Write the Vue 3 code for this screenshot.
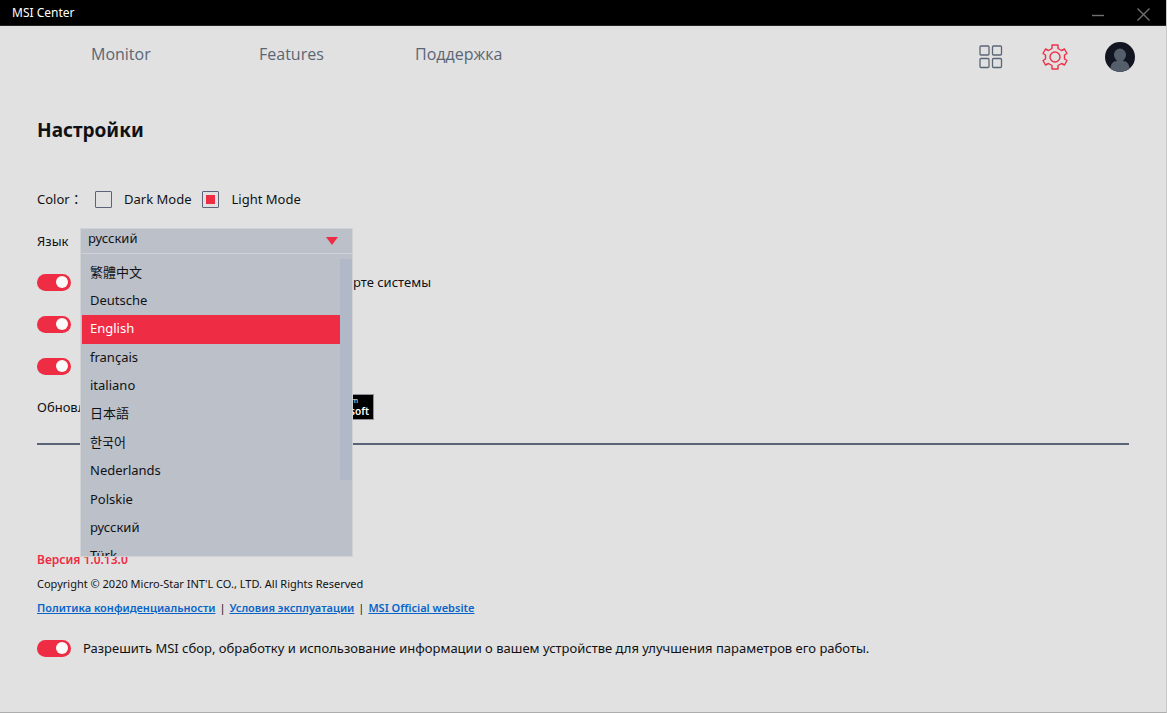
<script setup>
import { ref } from 'vue'

const languages = ['繁體中文', 'Deutsche', 'English', 'français', 'italiano', '日本語', '한국어', 'Nederlands', 'Polskie', 'русский', 'Türk']
const language = ref('русский')
const active = ref('English')
const mode = ref('light')
const showOnBoard = ref(true)
const notify = ref(true)
const autoStart = ref(true)
const consent = ref(true)
</script>

<template>
  <div class="window">
    <header class="titlebar">
      <span class="title">MSI Center</span>
      <div class="controls">
        <button type="button" aria-label="Minimize">
          <svg width="13" height="13" viewBox="0 0 13 13"><path d="M1 7.5h12" /></svg>
        </button>
        <button type="button" aria-label="Close">
          <svg width="13" height="13" viewBox="0 0 13 13"><path d="M.5.5l12 12M12.5.5l-12 12" /></svg>
        </button>
      </div>
    </header>

    <div class="topbar">
      <nav>
        <a href="#monitor">Monitor</a>
        <a href="#features">Features</a>
        <a href="#support">Поддержка</a>
      </nav>
      <div class="tools">
        <button type="button" aria-label="Apps">
          <svg width="26" height="24" viewBox="0 0 26 24" fill="none" stroke="#5a6675" stroke-width="1.3">
            <rect x="1" y="1" width="9" height="9" rx="1" />
            <rect x="13.5" y="1" width="9" height="9" rx="1" />
            <rect x="1" y="13.5" width="9" height="9" rx="1" />
            <rect x="13.5" y="13.5" width="9" height="9" rx="1" />
          </svg>
        </button>
        <button type="button" aria-label="Settings">
          <svg width="26" height="26" viewBox="0 0 26 26" fill="none" stroke="#ee3048" stroke-width="1.4" stroke-linejoin="round">
            <path d="M10 1h6v3.500l3.500 2 3-1.500 2.500 4.500-2.500 1.500v4l2.500 1.500-2.500 4.500-3-1.500-3.500 2V25h-6v-3.500l-3.500-2-3 1.500L1 16.500 3.500 15v-4L1 9.500 3.500 5l3 1.500 3.500-2z" />
            <circle cx="13" cy="13" r="5" />
          </svg>
        </button>
        <button type="button" aria-label="Account">
          <svg width="30" height="30" viewBox="0 0 30 30">
            <defs><clipPath id="disc"><circle cx="15" cy="15" r="15" /></clipPath></defs>
            <circle cx="15" cy="15" r="15" fill="#131620" />
            <g clip-path="url(#disc)" fill="#555f6c">
              <ellipse cx="15" cy="13" rx="6" ry="6.500" />
              <path d="M12 17h6v2c4 0 6 3 6.500 7v4h-19v-4c.5-4 2.500-7 6.500-7z" />
            </g>
          </svg>
        </button>
      </div>
    </div>

    <main>
      <h1>Настройки</h1>

      <div class="row colors" role="radiogroup" aria-label="Color">
        <span class="caption">Color：</span>
        <label><input v-model="mode" type="radio" name="mode" value="dark">Dark Mode</label>
        <label><input v-model="mode" type="radio" name="mode" value="light">Light Mode</label>
      </div>

      <div class="row language">
        <label class="caption" for="lang">Язык</label>
        <div class="picker">
          <select id="lang" v-model="language">
            <option v-for="name in languages" :key="name">{{ name }}</option>
          </select>
          <svg class="arrow" width="12" height="8" viewBox="0 0 12 8"><path d="M0 0h12L6 8z" fill="#ee2c44" /></svg>
          <div class="popup">
            <ul role="listbox" aria-label="Язык">
              <li
                v-for="name in languages"
                :key="name"
                role="option"
                :aria-selected="name === active"
                :class="{ active: name === active }"
                @click="language = name"
                @mouseenter="active = name"
              >{{ name }}</li>
            </ul>
            <div class="thumb"></div>
          </div>
        </div>
      </div>

      <label class="row wide"><input v-model="showOnBoard" class="switch" type="checkbox">на карте системы</label>
      <div class="row"><input v-model="notify" class="switch" type="checkbox" aria-label="Notifications"></div>
      <div class="row"><input v-model="autoStart" class="switch" type="checkbox" aria-label="Auto start"></div>
      <div class="row update">
        <span>Обновление</span>
        <a class="store" href="#store"><small>Get it from</small><b>Microsoft</b></a>
      </div>

      <hr>

      <footer>
        <p class="version">Версия 1.0.13.0</p>
        <p class="copyright">Copyright © 2020 Micro-Star INT'L CO., LTD. All Rights Reserved</p>
        <p class="links">
          <a href="#privacy">Политика конфиденциальности</a><i>|</i><a href="#terms">Условия эксплуатации</a><i>|</i><a href="#site">MSI Official website</a>
        </p>
        <label class="consent"><input v-model="consent" class="switch" type="checkbox">Разрешить MSI сбор, обработку и использование информации о вашем устройстве для улучшения параметров его работы.</label>
      </footer>
    </main>
  </div>
</template>

<style>
body {
  background: #e1e1e1;
}
</style>

<style scoped>
.window {
  box-sizing: border-box;
  display: flex;
  flex-direction: column;
  min-height: 100vh;
  border-right: 1px solid #c8c8c8;
  border-bottom: 1px solid #adadad;
  background: #e1e1e1;
  color: #101114;
  font: 13px/18px "Noto Sans", "Noto Sans CJK TC", "Noto Sans CJK KR", sans-serif;
}
button {
  display: flex;
  padding: 0;
  border: 0;
  background: none;
}
.titlebar {
  display: flex;
  align-items: center;
  justify-content: space-between;
  box-sizing: border-box;
  height: 26px;
  padding: 0 16px 0 12px;
  border-bottom: 1px solid #222;
  background: #000;
  color: #fff;
  font-size: 12px;
}
.controls {
  display: flex;
  gap: 33px;
  padding-top: 4px;
}
.controls svg {
  fill: none;
  stroke: #707070;
  stroke-width: 1.4;
}
.topbar {
  display: flex;
  justify-content: space-between;
  align-items: center;
  height: 62px;
  padding: 0 31px 0 91px;
}
nav {
  display: flex;
  padding-bottom: 6px;
}
nav a {
  color: #5a6675;
  font-family: "Open Sans", sans-serif;
  font-size: 16px;
  line-height: 24px;
  text-decoration: none;
}
nav a:nth-child(1) {
  width: 168px;
}
nav a:nth-child(2) {
  width: 156px;
}
.tools {
  display: flex;
  align-items: center;
  gap: 37px;
}
main {
  padding: 28px 37px 0;
}
h1 {
  margin: 0 0 34px;
  font-size: 19px;
  line-height: 28px;
}
.row {
  display: flex;
  align-items: center;
  height: 42px;
}
.colors label {
  display: flex;
  align-items: center;
  gap: 12px;
  margin-right: 11px;
}
.colors .caption {
  width: 58px;
  white-space: nowrap;
}
.colors input {
  appearance: none;
  box-sizing: border-box;
  width: 17px;
  height: 17px;
  margin: 0;
  border: 1px solid #5a6378;
  border-radius: 1px;
}
.colors input:checked {
  padding: 3px;
  background: #ee2c44 content-box;
}
.language {
  height: 41px;
}
.language .caption {
  width: 43px;
}
.picker {
  position: relative;
  width: 273px;
}
select {
  appearance: none;
  display: block;
  box-sizing: border-box;
  width: 100%;
  height: 26px;
  padding: 0 7px 5px;
  border: 1px solid #d0d2d6;
  border-radius: 0;
  background: #bbc0c9;
  color: #101114;
  font: inherit;
}
.arrow {
  position: absolute;
  top: 9px;
  right: 15px;
  pointer-events: none;
}
.popup {
  position: absolute;
  z-index: 1;
  top: 26px;
  left: 0;
  right: 0;
  box-sizing: border-box;
  height: 303px;
  padding: 5px 12px 0 1px;
  overflow: hidden;
  border: 1px solid #d0d2d6;
  border-top: 0;
  background: #bbc0c9;
}
ul {
  display: grid;
  grid-auto-rows: 1fr;
  height: 312px;
  margin: 0;
  padding: 0;
  list-style: none;
}
li {
  display: flex;
  align-items: center;
  padding: 0 0 2px 8px;
}
li.active {
  background: #ee2c44;
  color: #fff;
}
.thumb {
  position: absolute;
  top: 5px;
  right: -1px;
  width: 13px;
  height: 221px;
  background: #b1b8c8;
}
.wide {
  justify-content: space-between;
  width: 394px;
}
.switch {
  appearance: none;
  display: flex;
  flex: none;
  align-items: center;
  justify-content: flex-end;
  box-sizing: border-box;
  width: 34px;
  height: 17px;
  margin: 0;
  padding: 0 3px;
  border-radius: 9px;
  background: #ee2c44;
}
.switch::before {
  content: "";
  width: 12px;
  height: 12px;
  border-radius: 50%;
  background: #fafafa;
}
.switch:not(:checked) {
  justify-content: flex-start;
  background: #8a919c;
}
.update {
  justify-content: space-between;
  width: 337px;
  height: 40px;
}
.store {
  display: flex;
  flex-direction: column;
  box-sizing: border-box;
  height: 26px;
  padding: 1px 4px 0 25px;
  border: 1px solid #8d9099;
  background: #000;
  color: #fff;
  text-decoration: none;
}
.store small {
  font-size: 7px;
  line-height: 9px;
}
.store b {
  font-size: 10px;
  font-weight: 600;
  line-height: 13px;
}
hr {
  height: 2px;
  margin: 16px 0 0;
  border: 0;
  background: #5a6378;
}
footer {
  padding-top: 103px;
}
p {
  margin: 0;
  font-size: 11px;
  line-height: 24px;
}
.version {
  color: #ee2c44;
  font-size: 12px;
  font-weight: 600;
}
.links a {
  color: #0a64c8;
  font-weight: 600;
}
.links i {
  margin: 0 4px;
  font-style: normal;
}
.consent {
  display: flex;
  align-items: center;
  gap: 12px;
  padding-top: 19px;
}
</style>
